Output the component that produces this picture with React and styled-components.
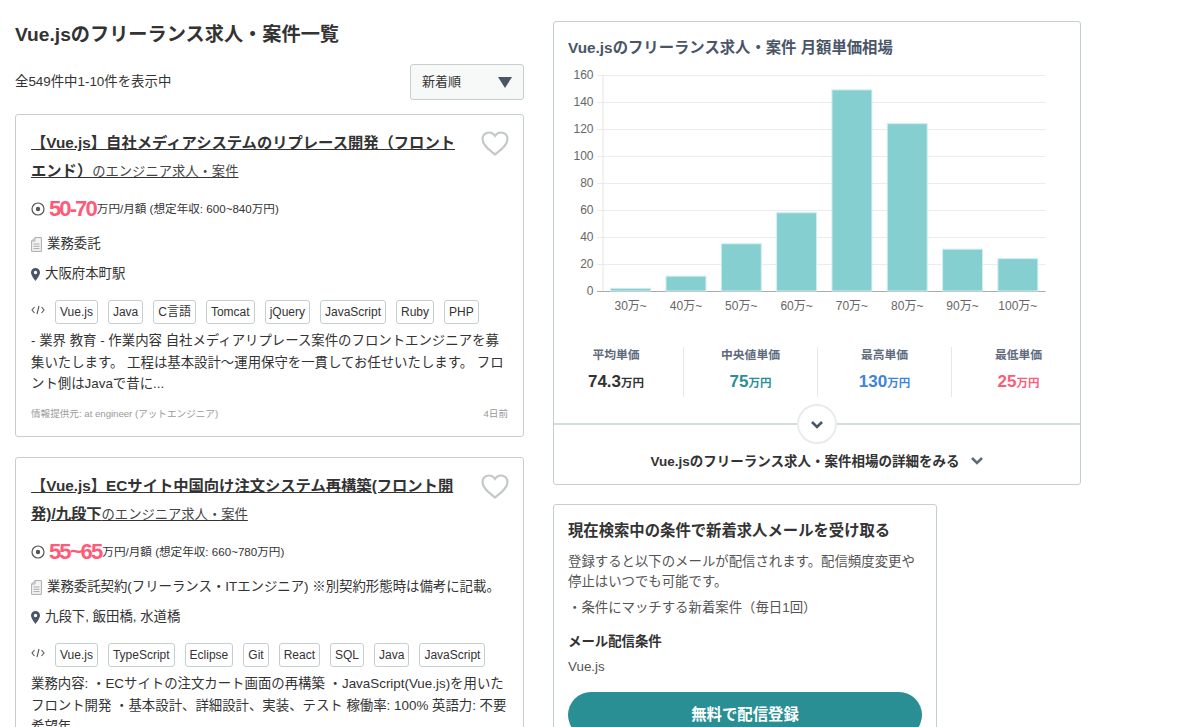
import React from 'react';
import styled, { createGlobalStyle } from 'styled-components';

const pink = '#ff5a78';
const teal = '#2a8f94';
const line = '#c5cfcf';

const jobs = [
  {
    title: '【Vue.js】自社メディアシステムのリプレース開発（フロントエンド）',
    price: '50-70',
    annual: '(想定年収: 600~840万円)',
    contract: '業務委託',
    place: '大阪府本町駅',
    tags: ['Vue.js', 'Java', 'C言語', 'Tomcat', 'jQuery', 'JavaScript', 'Ruby', 'PHP'],
    desc: '- 業界 教育 - 作業内容 自社メディアリプレース案件のフロントエンジニアを募集いたします。 工程は基本設計〜運用保守を一貫してお任せいたします。 フロント側はJavaで昔に...',
    source: '情報提供元: at engineer (アットエンジニア)',
    date: '4日前',
  },
  {
    title: '【Vue.js】ECサイト中国向け注文システム再構築(フロント開発)/九段下',
    price: '55~65',
    annual: '(想定年収: 660~780万円)',
    contract: '業務委託契約(フリーランス・ITエンジニア) ※別契約形態時は備考に記載。',
    place: '九段下, 飯田橋, 水道橋',
    tags: ['Vue.js', 'TypeScript', 'Eclipse', 'Git', 'React', 'SQL', 'Java', 'JavaScript'],
    desc: '業務内容: ・ECサイトの注文カート画面の再構築 ・JavaScript(Vue.js)を用いたフロント開発 ・基本設計、詳細設計、実装、テスト 稼働率: 100% 英語力: 不要 希望年',
  },
];

const bars = [
  { label: '30万~', value: 2 },
  { label: '40万~', value: 11 },
  { label: '50万~', value: 35 },
  { label: '60万~', value: 58 },
  { label: '70万~', value: 149 },
  { label: '80万~', value: 124 },
  { label: '90万~', value: 31 },
  { label: '100万~', value: 24 },
];

const stats = [
  { label: '平均単価', value: '74.3', color: '#333' },
  { label: '中央値単価', value: '75', color: teal },
  { label: '最高単価', value: '130', color: '#3d84e0' },
  { label: '最低単価', value: '25', color: pink },
];

const GlobalStyle = createGlobalStyle`
  html, body {
    margin: 0;
    height: 727px;
    overflow: hidden;
    background: #fff;
  }
  body {
    font-family: "Liberation Sans", "Noto Sans CJK JP", sans-serif;
    line-height: 20px;
    color: #333;
  }
  * {
    box-sizing: border-box;
  }
`;

const Page = styled.div`
  display: flex;
  gap: 29px;
  align-items: flex-start;
  height: 727px;
  overflow: hidden;
  padding: 21px 0 0 15px;
`;

const LeftColumn = styled.main`
  width: 509px;
  flex: none;
`;

const RightColumn = styled.aside`
  width: 528px;
  flex: none;
`;

const Heading = styled.h1`
  margin: 1px 0 0;
  font-size: 19.2px;
  line-height: 26px;
  font-weight: 700;
`;

const ResultBar = styled.div`
  display: flex;
  justify-content: space-between;
  align-items: center;
  margin-top: 16px;
  font-size: 13.4px;
`;

const SortSelect = styled.div`
  display: flex;
  justify-content: space-between;
  align-items: center;
  width: 114px;
  height: 36px;
  padding: 0 11px;
  background: #f7f9f9;
  border: 1px solid ${line};
  border-radius: 3px;
  font-size: 13px;
`;

const SortArrow = styled.span`
  width: 0;
  height: 0;
  border-left: 7.5px solid transparent;
  border-right: 7.5px solid transparent;
  border-top: 11px solid #4a5568;
`;

const JobCard = styled.article`
  margin-top: ${(p) => (p.$first ? '14px' : '20px')};
  padding: 14px 15px 15.5px;
  border: 1px solid ${line};
  border-radius: 3px;
`;

const CardHead = styled.div`
  display: flex;
  justify-content: space-between;
  align-items: flex-start;
`;

const JobTitle = styled.a`
  display: block;
  width: 432px;
  font-size: 15.3px;
  line-height: 28px;
  text-decoration: underline;
  color: #333;
  strong {
    font-weight: 700;
  }
  span {
    font-size: 13.3px;
    line-height: 1;
    color: #444;
  }
`;

const Heart = styled.svg`
  width: 28px;
  height: 25px;
  margin: 2px -1px 0 0;
  flex: none;
`;

const PriceRow = styled.div`
  display: flex;
  align-items: center;
  height: 24px;
  margin-top: 12px;
  font-size: 11.6px;
`;

const Price = styled.b`
  margin: 0 1px 0 4px;
  font-size: 22px;
  letter-spacing: -1.9px;
  color: ${pink};
`;

const MetaRow = styled.div`
  display: flex;
  align-items: center;
  gap: 5px;
  height: 20px;
  margin-top: ${(p) => p.$top}px;
  font-size: 13.4px;
`;

const TagRow = styled.div`
  display: flex;
  align-items: flex-start;
  margin-top: 16px;
`;

const CodeIcon = styled.svg`
  width: 14px;
  height: 10px;
  margin: 5px 10px 0 0;
  flex: none;
`;

const TagList = styled.div`
  display: flex;
  gap: 10px;
`;

const Tag = styled.span`
  height: 24px;
  padding: 0 4px;
  border: 1px solid ${line};
  border-radius: 3px;
  font-size: 12px;
  line-height: 22px;
  white-space: nowrap;
`;

const Desc = styled.p`
  margin: 6px 0 0;
  font-size: 13.4px;
  line-height: 21.5px;
`;

const CardFoot = styled.div`
  display: flex;
  justify-content: space-between;
  margin-top: 12px;
  font-size: 9.6px;
  line-height: 14px;
  color: #999;
`;

const Panel = styled.section`
  border: 1px solid ${line};
  border-radius: 3px;
`;

const ChartTitle = styled.h2`
  margin: 0;
  padding: 15px 14px 0;
  font-size: 15.35px;
  line-height: 22px;
  font-weight: 700;
  color: #4a5568;
`;

const Chart = styled.svg`
  display: block;
  width: 526px;
  height: 275px;
  margin-top: 3px;
  text {
    font-family: "Liberation Sans", "Noto Sans CJK JP", sans-serif;
    font-size: 12px;
    fill: #666;
  }
`;

const StatGrid = styled.div`
  display: grid;
  grid-template-columns: repeat(4, 1fr);
  height: 50px;
  margin: 10px -5px 0;
`;

const Stat = styled.div`
  display: flex;
  flex-direction: column;
  align-items: center;
  border-left: ${(p) => (p.$divided ? '1px solid #e4e9e9' : 'none')};
`;

const StatLabel = styled.div`
  font-size: 11.8px;
  line-height: 16px;
  font-weight: 700;
  color: #5f6b7d;
`;

const StatValue = styled.div`
  margin-top: 7px;
  font-size: 17px;
  line-height: 24px;
  font-weight: 700;
  color: ${(p) => p.$color};
  small {
    font-size: 11.5px;
  }
`;

const DetailLink = styled.div`
  position: relative;
  display: flex;
  justify-content: center;
  align-items: center;
  gap: 10px;
  height: 61px;
  margin-top: 26px;
  padding-top: 15px;
  border-top: 2px solid #d5dcdc;
  font-size: 13.5px;
  font-weight: 700;
`;

const Bubble = styled.span`
  position: absolute;
  top: -21px;
  left: 243px;
  display: flex;
  justify-content: center;
  align-items: center;
  width: 40px;
  height: 40px;
  background: #fff;
  border: 2px solid #e8ecec;
  border-radius: 50%;
`;

const Chevron = styled.svg`
  width: 14px;
  height: 9px;
  margin-top: ${(p) => p.$lift || 0}px;
  flex: none;
`;

const MailCard = styled(Panel)`
  width: 384px;
  margin-top: 19px;
  padding: 15px 14px 0;
`;

const MailTitle = styled.h3`
  margin: 0;
  font-size: 15.35px;
  line-height: 22px;
  font-weight: 700;
`;

const MailText = styled.p`
  margin: ${(p) => p.$top}px 0 0;
  font-size: 13.4px;
  line-height: 20px;
  color: #555;
`;

const MailLabel = styled.h4`
  margin: 14px 0 0;
  font-size: 13.4px;
  line-height: 20px;
  font-weight: 700;
`;

const SubmitButton = styled.button`
  display: block;
  width: 354px;
  height: 46px;
  margin-top: 15px;
  padding: 0;
  border: none;
  border-radius: 23px;
  background: ${teal};
  color: #fff;
  font-family: inherit;
  font-size: 15.4px;
  line-height: 20px;
  font-weight: 700;
`;

const YenIcon = () => (
  <svg width="14" height="14" viewBox="0 0 14 14">
    <circle cx="7" cy="7" r="6" fill="none" stroke="#555" strokeWidth="1.2" />
    <circle cx="7" cy="7" r="2.2" fill="#555" />
  </svg>
);

const DocIcon = () => (
  <svg width="11" height="15" viewBox="0 0 11 15">
    <path d="M4 .6h6.4v13.8H.6V4z" fill="#f4f4f4" stroke="#aaa" />
    <path d="M2.5 7h6M2.5 9.3h6M2.5 11.6h6M4 .6V4H.6" fill="none" stroke="#aaa" />
  </svg>
);

const PinIcon = () => (
  <svg width="9" height="13" viewBox="0 0 9 13">
    <path
      fillRule="evenodd"
      d="M4.5 0A4.5 4.5 0 0 0 0 4.5C0 7.5 4.5 13 4.5 13S9 7.5 9 4.5A4.5 4.5 0 0 0 4.5 0zm0 6.2a1.7 1.7 0 1 1 0-3.4 1.7 1.7 0 0 1 0 3.4z"
      fill="#4a5568"
    />
  </svg>
);

const ChevronDown = ({ color, lift }) => (
  <Chevron viewBox="0 0 14 9" $lift={lift}>
    <path d="M2 2l5 5 5-5" fill="none" stroke={color} strokeWidth="2.6" />
  </Chevron>
);

const Job = ({ job, first }) => (
  <JobCard $first={first}>
    <CardHead>
      <JobTitle>
        <strong>{job.title}</strong>
        <span>のエンジニア求人・案件</span>
      </JobTitle>
      <Heart viewBox="0 0 28 26" preserveAspectRatio="none">
        <path
          d="M14 24.500C9 20 1.500 15 1.500 8.200 1.500 4.400 4.400 1.500 8 1.500c2.500 0 4.700 1.300 6 3.500 1.300-2.200 3.500-3.500 6-3.500 3.600 0 6.500 2.900 6.500 6.700C26.500 15 19 20 14 24.500z"
          fill="none"
          stroke="#c4c8c8"
          strokeWidth="2.2"
        />
      </Heart>
    </CardHead>
    <PriceRow>
      <YenIcon />
      <Price>{job.price}</Price>
      <span>万円/月額 {job.annual}</span>
    </PriceRow>
    <MetaRow $top={13}>
      <DocIcon />
      {job.contract}
    </MetaRow>
    <MetaRow $top={10}>
      <PinIcon />
      {job.place}
    </MetaRow>
    <TagRow>
      <CodeIcon viewBox="0 0 14 10">
        <path d="M3.500 2L1 5l2.500 3M10.500 2L13 5l-2.500 3M8 1L6 9" fill="none" stroke="#555" strokeWidth="1.100" />
      </CodeIcon>
      <TagList>
        {job.tags.map((tag) => (
          <Tag key={tag}>{tag}</Tag>
        ))}
      </TagList>
    </TagRow>
    <Desc>{job.desc}</Desc>
    {job.source && (
      <CardFoot>
        <span>{job.source}</span>
        <span>{job.date}</span>
      </CardFoot>
    )}
  </JobCard>
);

const PriceChart = () => {
  const left = 49;
  const right = 491.5;
  const zero = 229;
  const scale = 216 / 160;
  const step = (right - left) / 8;

  return (
    <Chart viewBox="0 0 526 275">
      {[0, 20, 40, 60, 80, 100, 120, 140, 160].map((tick) => {
        const y = zero - tick * scale + 0.5;
        return (
          <g key={tick}>
            <line x1={43} x2={right} y1={y} y2={y} stroke={tick === 0 ? '#aaa' : '#ececec'} />
            <text x={39.5} y={y + 3} textAnchor="end">
              {tick}
            </text>
          </g>
        );
      })}
      <line x1={left} x2={left} y1={13} y2={229} stroke="#e4e4e4" />
      {bars.map((bar, i) => {
        const center = left + step * (i + 0.5);
        const height = bar.value * scale;
        return (
          <g key={bar.label}>
            <rect x={center - 20} y={zero - height} width={40} height={height} fill="#86cfd1" stroke="#d3eff0" />
            <text x={center} y={zero + 19} textAnchor="middle">
              {bar.label}
            </text>
          </g>
        );
      })}
    </Chart>
  );
};

export default function App() {
  return (
    <>
      <GlobalStyle />
      <Page>
        <LeftColumn>
          <Heading>Vue.jsのフリーランス求人・案件一覧</Heading>
          <ResultBar>
            <span>全549件中1-10件を表示中</span>
            <SortSelect>
              新着順
              <SortArrow />
            </SortSelect>
          </ResultBar>
          {jobs.map((job, i) => (
            <Job key={job.title} job={job} first={i === 0} />
          ))}
        </LeftColumn>
        <RightColumn>
          <Panel>
            <ChartTitle>Vue.jsのフリーランス求人・案件 月額単価相場</ChartTitle>
            <PriceChart />
            <StatGrid>
              {stats.map((stat, i) => (
                <Stat key={stat.label} $divided={i > 0}>
                  <StatLabel>{stat.label}</StatLabel>
                  <StatValue $color={stat.color}>
                    {stat.value}
                    <small>万円</small>
                  </StatValue>
                </Stat>
              ))}
            </StatGrid>
            <DetailLink>
              <Bubble>
                <ChevronDown color="#4a5568" />
              </Bubble>
              Vue.jsのフリーランス求人・案件相場の詳細をみる
              <ChevronDown color="#5f6b7d" lift={-4} />
            </DetailLink>
          </Panel>
          <MailCard>
            <MailTitle>現在検索中の条件で新着求人メールを受け取る</MailTitle>
            <MailText $top={10}>登録すると以下のメールが配信されます。配信頻度変更や停止はいつでも可能です。</MailText>
            <MailText $top={6}>・条件にマッチする新着案件（毎日1回）</MailText>
            <MailLabel>メール配信条件</MailLabel>
            <MailText $top={5}>Vue.js</MailText>
            <SubmitButton>無料で配信登録</SubmitButton>
          </MailCard>
        </RightColumn>
      </Page>
    </>
  );
}
